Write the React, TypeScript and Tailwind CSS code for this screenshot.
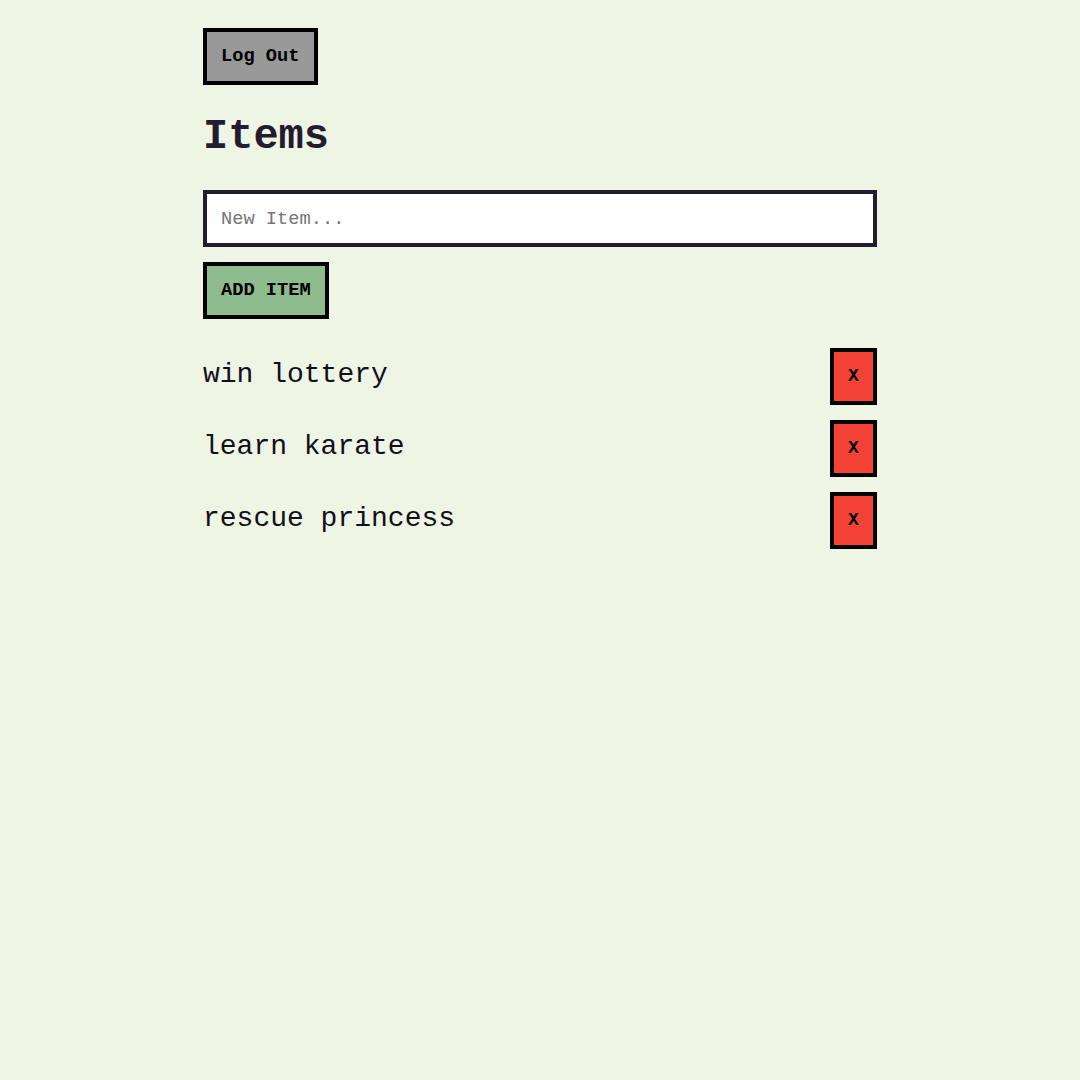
import React from "react";

const items = ["win lottery", "learn karate", "rescue princess"];

export default function App() {
  return (
    <div
      className="min-h-screen bg-[#eef5e4] text-[#231c30]"
      style={{ fontFamily: '"Liberation Mono", "Courier New", monospace' }}
    >
      <div className="mx-auto w-[674px] pt-[28px]">
        <button className="h-[57px] border-4 border-black bg-[#999999] px-[14px] text-[18.7px] font-bold text-black">
          Log Out
        </button>
        <h1 className="mt-[22px] text-[42px] font-bold leading-[60px]">Items</h1>
        <input
          placeholder="New Item..."
          className="mt-[23px] block h-[57px] w-full border-4 border-[#231c30] bg-white px-[14px] text-[18.7px] text-black placeholder:text-[#757575] outline-none"
        />
        <button className="mt-[15px] h-[57px] border-4 border-black bg-[#8fbc8f] px-[14px] text-[18.7px] font-bold text-black">
          ADD ITEM
        </button>
        <ul className="mt-[29px] flex flex-col gap-[15px]">
          {items.map((it) => (
            <li key={it} className="flex h-[57px] items-center justify-between">
              <span className="pb-[4px] text-[28px] text-[#120f1a]">{it}</span>
              <button className="h-[57px] w-[47px] border-4 border-black bg-[#f44336] text-[18px] font-bold text-black">
                X
              </button>
            </li>
          ))}
        </ul>
      </div>
    </div>
  );
}
